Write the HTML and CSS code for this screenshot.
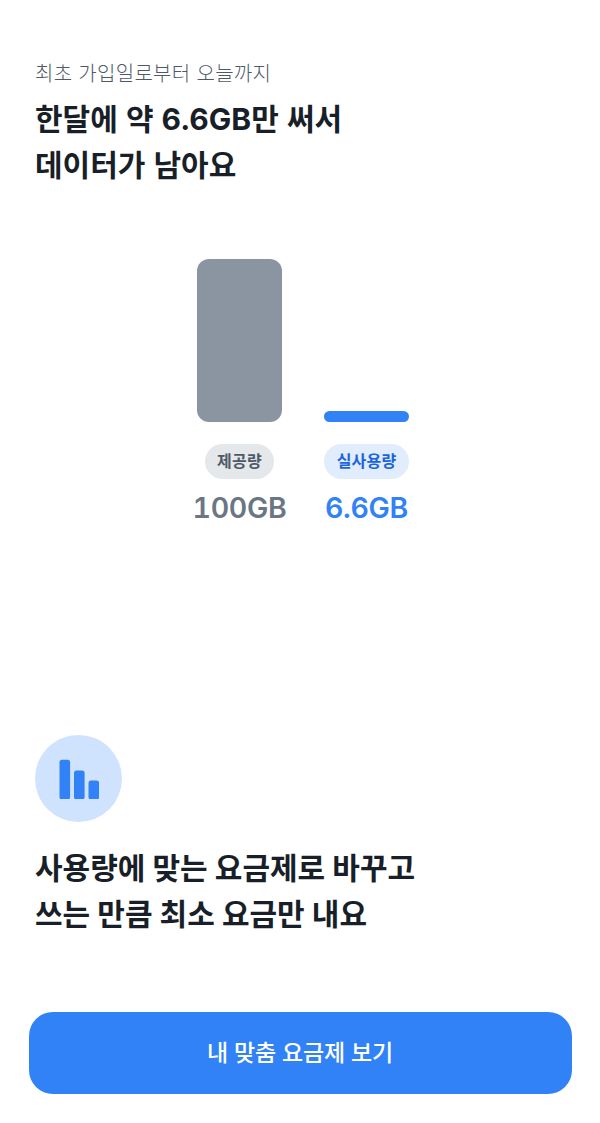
FILE: index.html
```html
<!DOCTYPE html>
<html lang="ko">
<head>
<meta charset="utf-8">
<title>데이터 사용량</title>
<link rel="stylesheet" href="styles.css">
</head>
<body>
<main class="page">
  <header class="head">
    <p class="sub">최초 가입일로부터 오늘까지</p>
    <h1 class="title">한달에 약 6.6GB만 써서<br>데이터가 남아요</h1>
  </header>
  <section class="chart">
    <div class="col">
      <div class="plot"><div class="bar bar-gray"></div></div>
      <span class="tag tag-gray">제공량</span>
      <span class="val val-gray">100GB</span>
    </div>
    <div class="col">
      <div class="plot"><div class="bar bar-blue"></div></div>
      <span class="tag tag-blue">실사용량</span>
      <span class="val val-blue">6.6GB</span>
    </div>
  </section>
  <section class="tip">
    <div class="circle">
      <svg class="icon" width="40" height="40" viewBox="0 0 40 40"><rect x="0.5" y="0.8" width="10.6" height="39.7" rx="2.5" fill="#3182f6"/><rect x="15" y="11.5" width="10.6" height="29" rx="2.5" fill="#3182f6"/><rect x="29.5" y="21.5" width="10.6" height="19" rx="2.5" fill="#3182f6"/></svg>
    </div>
    <h2 class="tip-text">사용량에 맞는 요금제로 바꾸고<br>쓰는 만큼 최소 요금만 내요</h2>
  </section>
  <button class="cta">내 맞춤 요금제 보기</button>
</main>
</body>
</html>
```
FILE: styles.css
```css
* { box-sizing: border-box; }
html, body { margin: 0; padding: 0; background: #fff; }
body { font-family: Inter, "Noto Sans CJK KR", sans-serif; }
.page { width: 600px; height: 1123px; display: flex; flex-direction: column; padding: 60px 0 0; }
.head { padding: 0 35px; }
.sub { margin: 0; font-size: 20px; line-height: 28px; color: #4e5968; letter-spacing: 0.3px; font-weight: 300; }
.title { margin: 8px 0 0; font-size: 30px; line-height: 46px; font-weight: 700; color: #191f28; letter-spacing: 0; word-spacing: 1px; }
.chart { display: flex; justify-content: center; gap: 42px; margin-top: 71px; padding-left: 6px; }
.col { width: 85px; display: flex; flex-direction: column; align-items: center; }
.plot { height: 163px; width: 85px; display: flex; align-items: flex-end; }
.bar { width: 85px; }
.bar-gray { height: 163px; background: #8b95a1; border-radius: 12px; }
.bar-blue { height: 11px; background: #3182f6; border-radius: 5.5px; }
.tag { margin-top: 22px; height: 35px; padding: 0 12px; border-radius: 17.5px; font-size: 16px; line-height: 34px; font-weight: 600; white-space: nowrap; letter-spacing: 0.2px; }
.tag-gray { background: #e5e8eb; color: #4e5968; }
.tag-blue { padding: 0 12.5px; background: #e1ecfd; color: #1b64da; }
.val { margin-top: 10px; font-size: 28.5px; line-height: 38px; font-weight: 600; letter-spacing: -0.3px; white-space: nowrap; font-variant-numeric: tabular-nums; }
.val-gray { color: #6b7684; }
.val-blue { color: #3182f6; }
.tip { margin-top: 208px; padding: 0 35px; }
.circle { width: 87px; height: 87px; border-radius: 50%; background: #d0e3fe; display: flex; align-items: center; justify-content: center; }
.tip-text { margin: 23px 0 0; font-size: 30px; line-height: 46px; font-weight: 700; color: #191f28; letter-spacing: 0; }
.cta { margin: 0 auto; margin-top: 75px; width: 543px; height: 82px; padding: 0 0 4px; border: 0; border-radius: 24px; background: #3182f6; color: #fff; font-family: inherit; font-size: 23px; font-weight: 500; letter-spacing: -0.15px; }
```
